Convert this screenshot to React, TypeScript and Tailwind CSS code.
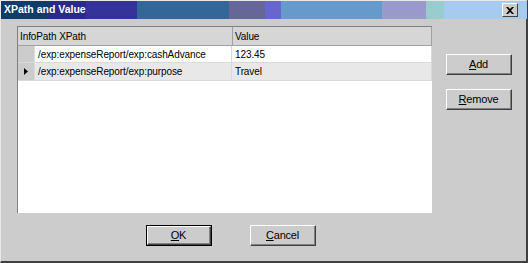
import React from "react";

const font = { fontFamily: '"Liberation Sans", Arial, sans-serif' };

function Btn({ children, def, className }: { children: React.ReactNode; def?: boolean; className?: string }) {
  return (
    <div
      className={
        "flex h-[21px] w-[66px] items-center justify-center text-[11px] tracking-[-0.2px] text-black bg-[#cccccc] " +
        (def ? "border border-black " : "") +
        (className || "")
      }
    >
      <div className="flex h-full w-full items-center justify-center border-t border-l border-t-white border-l-white border-r border-b border-r-[#404040] border-b-[#404040]">
        <div className="flex h-full w-full items-center justify-center border-b border-r border-b-[#808080] border-r-[#808080]">
          {children}
        </div>
      </div>
    </div>
  );
}

export default function App() {
  const segs = [
    ["#0f3a6c", 48],
    ["#2a2a88", 37],
    ["#333399", 51],
    ["#336699", 92],
    ["#666699", 36],
    ["#6666cc", 16],
    ["#6699cc", 101],
    ["#9999cc", 44],
    ["#99cccc", 18],
    ["#a6caf0", 83],
  ] as const;
  return (
    <div style={font} className="relative h-[263px] w-[528px] overflow-hidden bg-[#cccccc] select-none">
      <div className="flex h-full w-full flex-col border-t border-l border-t-[#e8e8e8] border-l-[#e8e8e8] border-r-2 border-b-2 border-r-[#404040] border-b-[#404040]">
        {/* title bar */}
        <div className="relative flex h-[18px] w-full">
          {segs.map(([c, w], i) => (
            <div key={i} style={{ background: c, width: w }} className="h-full shrink-0" />
          ))}
          <div className="h-full flex-1 bg-[#a6caf0]" />
          <div className="absolute left-[3px] top-0 flex h-full items-center text-[10.5px] font-bold text-white">XPath and Value</div>
          <div className="absolute right-[8px] top-[2px] flex h-[14px] w-[16px] items-center justify-center bg-[#cccccc] border-t border-l border-t-white border-l-white border-r border-b border-r-[#404040] border-b-[#404040]">
            <svg width="8" height="7" viewBox="0 0 8 7">
              <path d="M0 0h2l2 2 2-2h2L5 3.5 8 7H6L4 5 2 7H0l3-3.5z" fill="#000" />
            </svg>
          </div>
        </div>
        {/* body */}
        <div className="flex flex-1 flex-col">
          <div className="mt-[7px] flex">
            <div className="ml-[16px] flex h-[187px] w-[415px] flex-col border-t border-l border-t-[#808080] border-l-[#808080] bg-white text-[10px] tracking-[-0.1px] text-black">
              {/* header */}
              <div className="flex h-[19px] bg-[#d6d6d6] border-b border-b-[#a0a0a0]">
                <div className="flex w-[215px] items-center pl-[2px] border-r border-r-[#a0a0a0]">InfoPath XPath</div>
                <div className="flex flex-1 items-center pl-[2px] border-r border-r-[#a0a0a0]">Value</div>
              </div>
              {/* row 1 */}
              <div className="flex h-[17px] border-b border-b-[#dadada]">
                <div className="w-[17px] bg-[#cccccc] border-r border-r-[#dadada]" />
                <div className="flex w-[197px] items-center pl-[3px] border-r border-r-[#dadada]">/exp:expenseReport/exp:cashAdvance</div>
                <div className="flex flex-1 items-center pl-[3px] border-r border-r-[#dadada]">123.45</div>
              </div>
              {/* row 2 */}
              <div className="flex h-[18px] bg-[#e8e8e8] border-b border-b-[#dadada]">
                <div className="flex w-[17px] items-center justify-center bg-[#cccccc] border-r border-r-[#dadada]">
                  <svg width="4" height="7" viewBox="0 0 4 7"><path d="M0 0l4 3.5L0 7z" fill="#000" /></svg>
                </div>
                <div className="flex w-[197px] items-center pl-[3px] border-r border-r-[#dadada]">/exp:expenseReport/exp:purpose</div>
                <div className="flex flex-1 items-center pl-[3px] border-r border-r-[#dadada]">Travel</div>
              </div>
              <div className="flex-1" />
            </div>
            <div className="ml-[14px] mt-[28px] flex flex-col gap-[14px]">
              <Btn><span><u>A</u>dd</span></Btn>
              <Btn><span><u>R</u>emove</span></Btn>
            </div>
          </div>
          <div className="mt-[12px] flex">
            <Btn def className="ml-[145px]"><span><u>O</u>K</span></Btn>
            <Btn className="ml-[38px]"><span><u>C</u>ancel</span></Btn>
          </div>
        </div>
      </div>
    </div>
  );
}
